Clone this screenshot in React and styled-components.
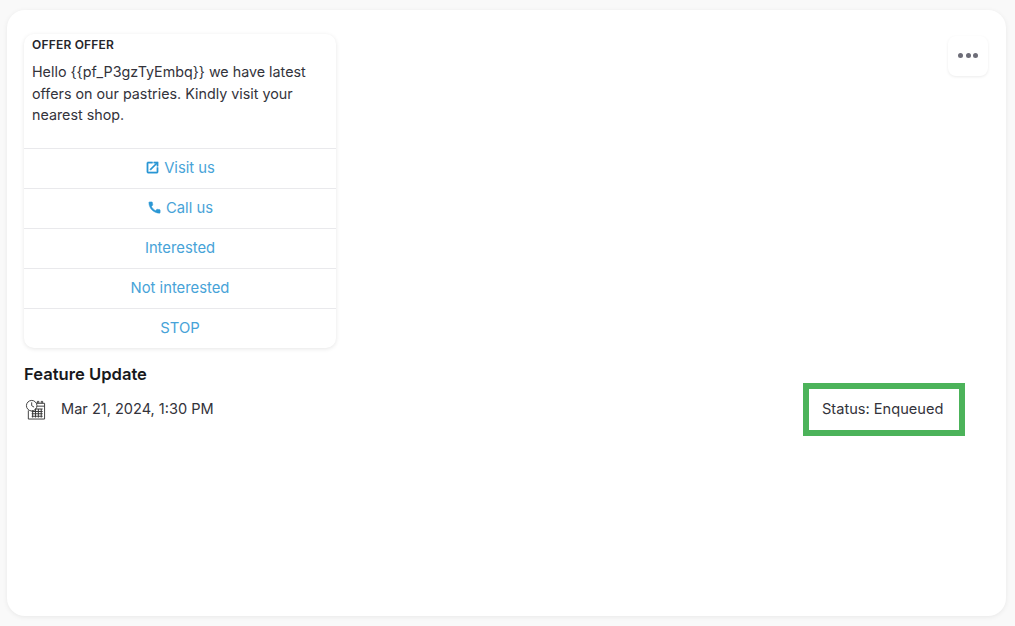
import React from "react";
import styled, { createGlobalStyle } from "styled-components";
import { MdCall, MdOpenInNew } from "react-icons/md";

const GlobalStyle = createGlobalStyle`
  html, body {
    margin: 0;
    height: 100%;
    background: #f9f9f9;
    font-family: Inter, "Liberation Sans", sans-serif;
  }
  * { box-sizing: border-box; }
`;

const Page = styled.div`
  width: 1015px;
  height: 626px;
  padding: 10px 9px 10px 7px;
  overflow: hidden;
`;

const Card = styled.div`
  height: 606px;
  background: #fff;
  border-radius: 18px;
  box-shadow: 0 1px 5px rgba(0, 0, 0, 0.07);
  padding: 24px 18px 0 17px;
  display: flex;
  flex-direction: column;
`;

const TopRow = styled.div`
  display: flex;
  justify-content: space-between;
  align-items: flex-start;
`;

const Bubble = styled.div`
  width: 312px;
  background: #fff;
  border-radius: 10px;
  box-shadow: 0 1px 4px rgba(0, 0, 0, 0.1);
  overflow: hidden;
`;

const BubbleBody = styled.div`
  padding: 4px 8px 0;
  height: 114px;
`;

const Heading = styled.div`
  font-size: 12px;
  line-height: 14px;
  font-weight: 600;
  color: #26262b;
  letter-spacing: 0.2px;
  margin-bottom: 9px;
`;

const Message = styled.div`
  font-size: 14.3px;
  line-height: 21.7px;
  color: #33333b;
`;

const ActionRow = styled.div`
  height: 40px;
  padding-bottom: 2px;
  border-top: 1px solid #e9e9ec;
  display: flex;
  align-items: center;
  justify-content: center;
  gap: 4px;
  font-size: 14.8px;
  color: #47a3d8;

  svg {
    color: #2b97d4;
    flex: none;
  }
  svg path:not([fill="none"]) {
    stroke: #2b97d4;
    stroke-width: 0.8;
  }
`;

const MenuButton = styled.button`
  width: 40px;
  height: 40px;
  margin-top: 2px;
  border: 0;
  padding: 0 0 1px;
  background: #fff;
  border-radius: 8px;
  box-shadow: 0 1px 3px rgba(0, 0, 0, 0.08);
  display: flex;
  align-items: center;
  justify-content: center;
  gap: 2.5px;
`;

const Dot = styled.span`
  width: 5px;
  height: 5px;
  border-radius: 50%;
  background: #6d6d78;
`;

const Title = styled.div`
  margin-top: 15px;
  font-size: 16.6px;
  line-height: 22px;
  font-weight: 600;
  color: #18181c;
`;

const MetaRow = styled.div`
  display: flex;
  align-items: flex-start;
  justify-content: space-between;
  padding-right: 23px;
  margin-top: -2px;
`;

const DateBlock = styled.div`
  display: flex;
  align-items: center;
  gap: 15px;
  padding: 15px 0 0 1px;
  font-size: 14.55px;
  line-height: 22px;
  color: #33333b;
`;

const StatusBox = styled.div`
  width: 162px;
  height: 53px;
  border: 6px solid #4cb35a;
  padding: 0 0 1px 13px;
  display: flex;
  align-items: center;
  font-size: 14.6px;
  color: #33333b;
`;

const ScheduleIcon = () => (
  <svg width="21" height="21" viewBox="0 0 22 22" fill="none" stroke="#3c3c3c" strokeWidth="1">
    <path d="M9 4.5h11.5v16.5H3.5v-9" />
    <path d="M13 4.5V2.5h1.5v2M17 4.5V2.5h1.5v2" />
    <path d="M11 7.5h9.5" />
    <circle cx="7" cy="7" r="5.5" fill="#fff" />
    <path d="M7 3.5V7l2.5 1.5" />
    <path d="M7 13h11.5M7 15.5h11.5M7 18h11.5M8 12v7.5M11 10v9.5M14 10v9.5M17 10v9.5M11 10.5h7.5" strokeWidth="1.1" />
  </svg>
);

const App = () => (
  <Page>
    <GlobalStyle />
    <Card>
      <TopRow>
        <Bubble>
          <BubbleBody>
            <Heading>OFFER OFFER</Heading>
            <Message>
              {"Hello {{pf_P3gzTyEmbq}} we have latest offers on our pastries. Kindly visit your nearest shop."}
            </Message>
          </BubbleBody>
          <ActionRow><MdOpenInNew size={15} />Visit us</ActionRow>
          <ActionRow><MdCall size={15} />Call us</ActionRow>
          <ActionRow>Interested</ActionRow>
          <ActionRow>Not interested</ActionRow>
          <ActionRow>STOP</ActionRow>
        </Bubble>
        <MenuButton aria-label="More">
          <Dot /><Dot /><Dot />
        </MenuButton>
      </TopRow>
      <Title>Feature Update</Title>
      <MetaRow>
        <DateBlock>
          <ScheduleIcon />
          Mar 21, 2024, 1:30 PM
        </DateBlock>
        <StatusBox>Status: Enqueued</StatusBox>
      </MetaRow>
    </Card>
  </Page>
);

export default App;
